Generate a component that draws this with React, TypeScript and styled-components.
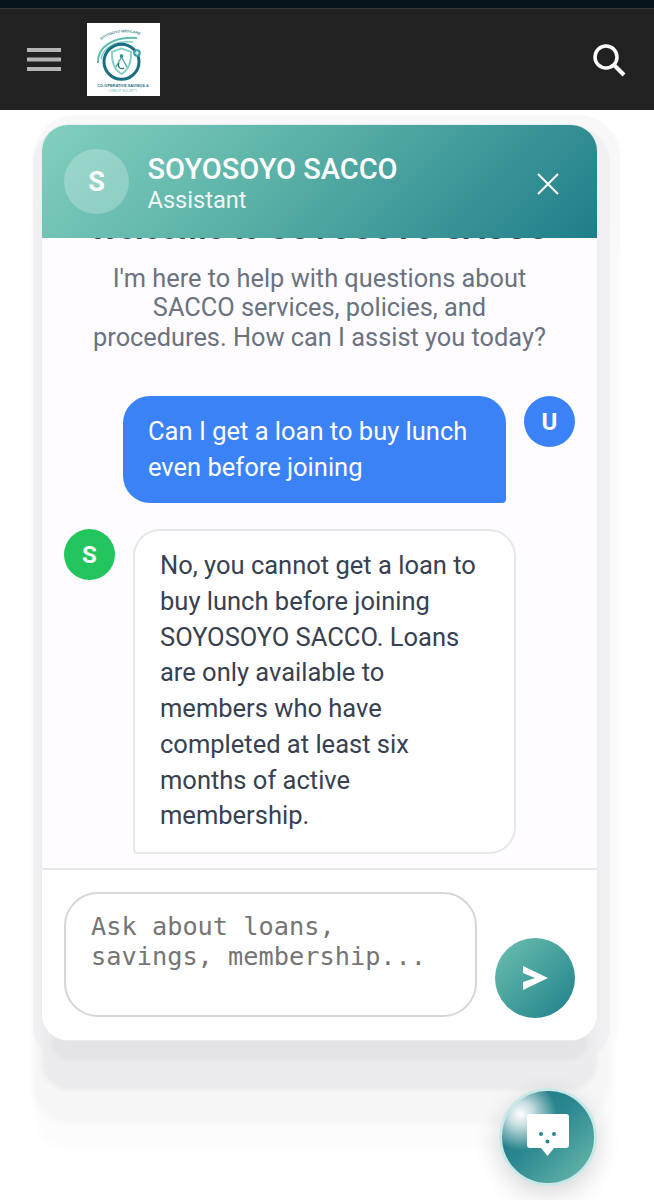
import React from "react";
import styled, { createGlobalStyle } from "styled-components";

const Global = createGlobalStyle`
  html, body { margin: 0; padding: 0; background: #fff; }
  body { font-family: Roboto, "Noto Sans", sans-serif; width: 654px; height: 1200px; overflow: hidden; }
`;
const Page = styled.div`
  width: 654px; height: 1200px; position: relative; overflow: hidden; background: #fff;
`;
const StatusStrip = styled.div`
  height: 8px; background: #06131a; border-bottom: 1px solid #39373a;
`;
const NavBar = styled.header`
  height: 101px; background: #212121; display: flex; align-items: center;
  padding: 0 27px; box-sizing: border-box;
`;
const Logo = styled.div`
  width: 73px; height: 73px; background: #fff; margin-left: 26px; flex: none;
  svg { display: block; }
`;
const NavSpacer = styled.div`flex: 1;`;
const Panel = styled.section`
  position: relative; width: 555px; height: 915px; margin: 15px 0 0 42px; border-radius: 26px; background: #fff;
  overflow: hidden; display: flex; flex-direction: column;
`;
const PanelShadow = styled.div`
  position: absolute; left: 42px; top: 125px; width: 555px; height: 915px; border-radius: 26px;
  box-shadow: 0 0 0 1px #eaecef, 0 30px 4px -10px #e4e4e6, 0 50px 4px 0 #ececee, 2px 12px 1px 11px #f1f1f3,
    2px 73px 5px 11px #f7f7f8, 5px 96px 10px 14px #fdfcfd, 7px 6px 2px 16px #f9f8f9;
`;
const ChatHead = styled.div`
  position: relative; z-index: 1;
  height: 113px; flex: none; background: linear-gradient(135deg, #82d0bf 0%, #5db3a8 40%, #1f7e8a 100%);
  display: flex; align-items: center; padding: 0 38px 0 22px; box-sizing: border-box; color: #fff;
  svg { margin-top: 4px; }
`;
const HeadAvatar = styled.div`
  width: 65px; height: 65px; border-radius: 50%; background: rgba(255,255,255,.24);
  display: flex; align-items: center; justify-content: center; font-size: 27px; font-weight: 700; flex: none;
`;
const HeadText = styled.div`margin-left: 18.5px; flex: 1; margin-top: 5px;`;
const HeadTitle = styled.div`font-size: 29px; font-weight: 500; line-height: 32px;`;
const HeadSub = styled.div`font-size: 23.6px; line-height: 31px; opacity: .9;`;
const Messages = styled.div`
  flex: 1; min-height: 0; background: #fefcfe; overflow: hidden; display: flex; flex-direction: column;
  justify-content: flex-end; padding: 0 22px 14px; box-sizing: border-box;
  border-bottom: 2px solid #e8e8ec;
`;
const Welcome = styled.div`
  text-align: center; padding: 0 22px; margin-bottom: 44px; flex: none;
`;
const WelcomeTitle = styled.h3`
  margin: 0 -30px 18px; font-size: 32.3px; line-height: 36px; font-weight: 700; color: #374151; white-space: nowrap;
`;
const WelcomeText = styled.p`
  margin: 0; font-size: 25.35px; line-height: 29.5px; color: #6b7280;
`;
const Row = styled.div<{ $user?: boolean }>`
  display: flex; flex: none; align-items: flex-start; justify-content: ${p => (p.$user ? "flex-end" : "flex-start")};
  margin-bottom: ${p => (p.$user ? "26px" : "0")};
`;
const Avatar = styled.div<{ $color: string; $user?: boolean }>`
  width: 51px; height: 51px; border-radius: 50%; background: ${p => p.$color}; color: #fff;
  display: flex; align-items: center; justify-content: center; font-size: 24px; font-weight: 700;
  flex: none; margin: ${p => (p.$user ? "0 0 0 18px" : "0 18px 0 0")};
`;
const UserBubble = styled.div`
  width: 383px; box-sizing: border-box; background: #3b82f6; color: #fff; border-radius: 27px 27px 4px 27px;
  padding: 17px 25px 18px; font-size: 25.5px; line-height: 36px;
`;
const BotBubble = styled.div`
  width: 383px; box-sizing: border-box; background: #fff; color: #374151; border: 2px solid #e7e7eb;
  border-radius: 27px 27px 27px 4px; padding: 17px 25px 18px; font-size: 25.5px; line-height: 35.7px;
`;
const InputBar = styled.div`
  height: 170px; flex: none; background: #fff; display: flex; align-items: flex-end;
  padding: 0 22px 22px; box-sizing: border-box; gap: 18px;
`;
const Prompt = styled.textarea`
  width: 413px; height: 125px; box-sizing: border-box; border: 2px solid #d5d6da; border-radius: 34px;
  padding: 18px 25px; font-family: "DejaVu Sans Mono", monospace; font-size: 25.3px; line-height: 30px;
  resize: none; outline: none; background: #fff; margin-bottom: 1px;
  &::placeholder { color: #757575; opacity: 1; }
`;
const Send = styled.button`
  width: 80px; height: 80px; border-radius: 50%; border: none; padding: 0; flex: none;
  background: linear-gradient(135deg, #6cc0ae 0%, #1f808b 100%);
  display: flex; align-items: center; justify-content: center;
`;
const Fab = styled.button`
  position: absolute; left: 499px; top: 1088px; width: 92px; height: 92px; border-radius: 50%; padding: 0;
  border: 3px solid #c9e8e8; box-sizing: content-box;
  background: radial-gradient(circle at 20% 25%, rgba(255,255,255,1) 0%, rgba(255,255,255,.75) 12%, rgba(255,255,255,0) 36%),
    linear-gradient(135deg, #167380 0%, #2b8790 45%, #6dbdad 100%);
  box-shadow: 0 8px 26px rgba(0,0,0,.16);
  display: flex; align-items: center; justify-content: center;
  svg { margin-bottom: 4px; }
`;

export default function App() {
  return (
    <Page>
      <Global />
      <StatusStrip />
      <NavBar>
        <svg width="34" height="24" viewBox="0 0 34 24">
          <rect x="0" y="0" width="34" height="4" fill="#b5b5b5" />
          <rect x="0" y="9.5" width="34" height="4" fill="#b5b5b5" />
          <rect x="0" y="19" width="34" height="4" fill="#b5b5b5" />
        </svg>
        <Logo>
          <svg width="73" height="73" viewBox="0 0 73 73">
            <path d="M11 40 C10 25 25 13 50 15" fill="none" stroke="#5cbcae" strokeWidth="2" />
            <path d="M14 36 C16 25 28 17 46 19" fill="none" stroke="#7fd0c4" strokeWidth="1.4" />
            <circle cx="34.5" cy="38.7" r="17.5" fill="none" stroke="#1a6f82" strokeWidth="3" />
            <path d="M34.5 25.5 L44 29 C44.5 39 41 47 34.5 51 C28 47 24.5 39 25 29 Z" fill="none" stroke="#7fcfc4" strokeWidth="1.8" />
            <path d="M29 44 L34.5 34 L40 44" fill="none" stroke="#4fa5a8" strokeWidth="1.4" />
            <circle cx="34.5" cy="33" r="1.8" fill="#2d8a94" />
            <path d="M32 40 a3.6 3.6 0 0 0 5 5" fill="none" stroke="#1a6f82" strokeWidth="1.2" />
            <circle cx="50" cy="30" r="3.8" fill="#3f9fa6" />
            <path d="M50 28 v4 M48 30 h4" stroke="#fff" strokeWidth="1.1" />
            <path id="lp" d="M14 17 Q32 4 56 13" fill="none" />
            <text fontFamily="'Liberation Sans', sans-serif" fontSize="3.6" fontWeight="700" fill="#3f8a90">
              <textPath href="#lp">SOYOSOYO MEDICARE</textPath>
            </text>
            <text x="36" y="64" textAnchor="middle" fontFamily="'Liberation Sans', sans-serif" fontSize="3.9" fontWeight="700" fill="#256f80">CO-OPERATIVE SAVINGS &amp;</text>
            <text x="36" y="68.5" textAnchor="middle" fontFamily="'Liberation Sans', sans-serif" fontSize="3.4" fill="#6bbcb5">CREDIT SOCIETY</text>
          </svg>
        </Logo>
        <NavSpacer />
        <svg width="36" height="36" viewBox="0 0 36 36" fill="none" stroke="#fff">
          <circle cx="15" cy="15" r="11" strokeWidth="3.5" />
          <path d="M23 23 L33 33" strokeWidth="4" />
        </svg>
      </NavBar>
      <PanelShadow />
      <Panel>
        <ChatHead>
          <HeadAvatar>S</HeadAvatar>
          <HeadText>
            <HeadTitle>SOYOSOYO SACCO</HeadTitle>
            <HeadSub>Assistant</HeadSub>
          </HeadText>
          <svg width="22" height="22" viewBox="0 0 22 22" stroke="#fff" strokeWidth="2" fill="none">
            <path d="M1 1 L21 21 M21 1 L1 21" />
          </svg>
        </ChatHead>
        <Messages>
          <Welcome>
            <WelcomeTitle>Welcome to SOYOSOYO SACCO</WelcomeTitle>
            <WelcomeText>
              I'm here to help with questions about SACCO services, policies, and procedures. How can I assist you today?
            </WelcomeText>
          </Welcome>
          <Row $user>
            <UserBubble>Can I get a loan to buy lunch even before joining</UserBubble>
            <Avatar $color="#3b82f6" $user>U</Avatar>
          </Row>
          <Row>
            <Avatar $color="#22c55e">S</Avatar>
            <BotBubble>
              No, you cannot get a loan to buy lunch before joining SOYOSOYO SACCO. Loans are only available to members who have completed at least six months of active membership.
            </BotBubble>
          </Row>
        </Messages>
        <InputBar>
          <Prompt placeholder="Ask about loans, savings, membership..." readOnly />
          <Send aria-label="Send">
            <svg width="25" height="24" viewBox="0 0 25 24" fill="#fff">
              <path d="M0 0 L25 12 L0 24 L0 16 L12 12 L0 7 Z" />
            </svg>
          </Send>
        </InputBar>
      </Panel>
      <Fab aria-label="Open chat">
        <svg width="42" height="42" viewBox="0 0 42 42">
          <path d="M3 0 H39 A3 3 0 0 1 42 3 V31 A3 3 0 0 1 39 34 H27 L20.5 42 L14 34 H3 A3 3 0 0 1 0 31 V3 A3 3 0 0 1 3 0 Z" fill="#fff" />
          <circle cx="14" cy="20" r="2" fill="#2a8490" />
          <circle cx="27" cy="20" r="2" fill="#2a8490" />
          <circle cx="20.5" cy="27.6" r="2" fill="#2a8490" />
        </svg>
      </Fab>
    </Page>
  );
}
